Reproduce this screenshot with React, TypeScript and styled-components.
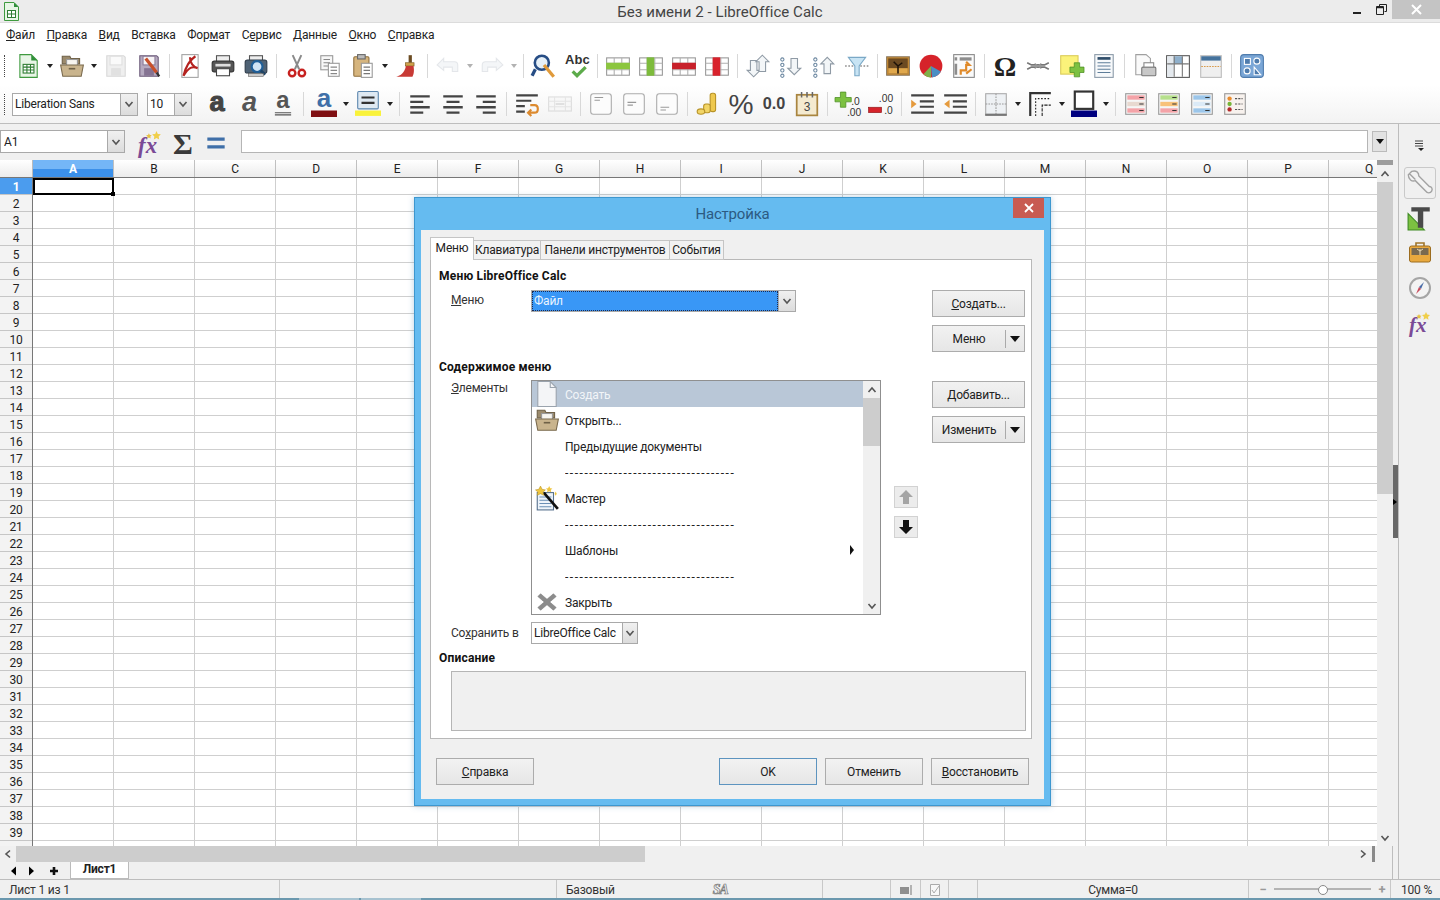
import React from 'react';
import styled, { createGlobalStyle } from 'styled-components';

const FONT = `Roboto, "Noto Sans", "Liberation Sans", sans-serif`;

const Global = createGlobalStyle`
  * { box-sizing: border-box; }
  html, body { margin: 0; padding: 0; background: #f0f0f0; }
  body { font-family: ${FONT}; font-size: 12px; color: #222; letter-spacing: -0.2px; }
`;

const Page = styled.div`position: relative; width: 1440px; height: 900px; overflow: hidden; display: flex; flex-direction: column;`;
const TitleBar = styled.div`height: 23px; flex: none; position: relative; display: flex; justify-content: center; background: #ececec; border-bottom: 1px solid #dcdcdc;`;
const AppLogo = styled.svg`position: absolute; left: 2px; top: 2px;`;
const TitleText = styled.div`font-size: 15px; line-height: 24px; color: #444; letter-spacing: 0.05px;`;
const WinControls = styled.div`position: absolute; right: 0; top: 0; height: 19px; display: flex; align-items: center;`;
const WinBtn = styled.div<{ $w: number }>`width: ${p => p.$w}px; height: 19px; display: flex; align-items: center; justify-content: center;`;
const WinClose = styled(WinBtn)`background: #c4c4c4;`;

const MenuBar = styled.div`height: 23px; flex: none; background: #fff; display: flex; align-items: center; gap: 11.6px; padding-left: 6px; font-size: 12px; color: #222;`;
const U = styled.span`text-decoration: underline; text-underline-offset: 1px;`;

const Toolbar = styled.div<{ $h: number; $pale?: boolean }>`
  height: ${p => p.$h}px; flex: none; display: flex; align-items: center; padding-left: 11.5px; position: relative;
  background: ${p => (p.$pale ? 'linear-gradient(#ffffff, #f3f3f3)' : '#fff')};
`;
const Grip = styled.div`position: absolute; left: 4px; top: 9px; bottom: 8px; border-left: 1px dotted #444;`;
const Tool = styled.div<{ $dim?: boolean }>`width: 33px; height: 26px; flex: none; display: flex; align-items: center; justify-content: center; opacity: ${p => (p.$dim ? 0.45 : 1)};`;
const Drop = styled.div<{ $dim?: boolean }>`width: 11px; flex: none; display: flex; justify-content: center; opacity: ${p => (p.$dim ? 0.35 : 1)}; &::before { content: ''; border: 3px solid transparent; border-top: 4px solid #222; border-bottom: 0; }`;
const Sep = styled.div`width: 8px; flex: none; height: 24px; display: flex; justify-content: center; &::before { content: ''; width: 1px; background: #d8d8d8; }`;
const IconSvg = styled.svg`overflow: visible; letter-spacing: normal; flex: none;`;

const Combo = styled.div<{ $w: number; $h?: number }>`
  width: ${p => p.$w}px; height: ${p => p.$h ?? 23}px; flex: none; display: flex; background: #fff; border: 1px solid #a9a9a9;
  color: #222; font-size: 12px; line-height: 1;
`;
const ComboText = styled.div`flex: 1; min-width: 0; display: flex; align-items: center; padding-left: 2px; white-space: nowrap; overflow: hidden;`;
const ComboSel = styled(ComboText)`background: #3997f6; color: #e8f3ff; outline: 1px dotted #1a2b55; outline-offset: -1px;`;
const ComboBtn = styled.div<{ $w?: number }>`width: ${p => p.$w ?? 17}px; flex: none; border: 1px solid #a9a9a9; border-width: 0 0 0 1px; background: linear-gradient(#f0f0f0, #dcdcdc); display: flex; align-items: center; justify-content: center;`;
const NameBox = styled(Combo)`padding-left: 1px;`;
const FontCombo = styled(Combo)`margin-right: 9px; padding-left: 0;`;
const SizeCombo = styled(Combo)`margin-right: 8px; padding-left: 0;`;
const FontRowStart = styled.div`width: 0.5px; flex: none;`;

const Body = styled.div`flex: 1; min-height: 0; display: flex; border-top: 1px solid #bdbdbd;`;
const MainCol = styled.div`width: 1393px; flex: none; display: flex; flex-direction: column;`;
const FormulaBar = styled.div`height: 36px; flex: none; display: flex; align-items: flex-start; padding-top: 6px; background: #f0f0f0;`;
const FxTools = styled.div`display: flex; margin: 0 9px 0 8px;`;
const FormulaInput = styled.div`flex: 1; height: 23px; background: #fff; border: 1px solid #b5b5b5;`;
const FormulaDrop = styled.div`width: 15px; height: 21px; margin: 1px 6px 0 4px; background: #e2e2e2; border: 1px solid #bbb; display: flex; align-items: center; justify-content: center; &::before { content: ''; border: 4px solid transparent; border-top: 5px solid #111; border-bottom: 0; }`;

const SheetRow = styled.div`flex: 1; min-height: 0; display: flex;`;
const Sheet = styled.div`width: 1377px; flex: none; display: flex; flex-direction: column; overflow: hidden;`;
const ColHeaders = styled.div`height: 18px; flex: none; display: flex; border-bottom: 1px solid #777; background: linear-gradient(#fff, #ececec);`;
const Corner = styled.div`width: 33px; flex: none; border-right: 1px solid #bbb;`;
const ColHead = styled.div<{ $on?: boolean }>`
  width: 81px; flex: none; text-align: center; line-height: 19px; font-size: 12px; border-right: 1px solid #c0c0c0; color: ${p => (p.$on ? '#fff' : '#222')};
  background: ${p => (p.$on ? 'linear-gradient(#74b6f7 50%, #3b90ea 50%)' : 'transparent')};
  font-weight: ${p => (p.$on ? 700 : 400)};
`;
const GridWrap = styled.div`flex: 1; min-height: 0; display: flex;`;
const RowHeads = styled.div`width: 33px; flex: none; overflow: hidden; border-right: 1px solid #777; background: #f3f3f3;`;
const RowHead = styled.div<{ $on?: boolean }>`
  height: 17px; text-align: center; line-height: 18px; font-size: 12px; border-bottom: 1px solid #c6c6c6; color: ${p => (p.$on ? '#fff' : '#222')};
  background: ${p => (p.$on ? '#4b9cee' : 'transparent')}; font-weight: ${p => (p.$on ? 700 : 400)};
`;
const GridBody = styled.div`
  position: relative; flex: 1; background-color: #fff;
  background-image:
    repeating-linear-gradient(to right, transparent 0 80px, #cfcfcf 80px 81px),
    repeating-linear-gradient(to bottom, transparent 0 16px, #cfcfcf 16px 17px);
`;
const CellCursor = styled.div`
  position: absolute; left: 0; top: 0; width: 81px; height: 17px; border: 2px solid #000;
  &::after { content: ''; position: absolute; right: -3px; bottom: -3px; width: 4px; height: 4px; background: #000; }
`;
const VScroll = styled.div`width: 16px; flex: none; display: flex; flex-direction: column; background: #f0f0f0;`;
const SplitBox = styled.div`height: 5px; background: #9c9c9c; flex: none;`;
const VArrow = styled.div`height: 17px; flex: none; display: flex; align-items: center; justify-content: center;`;
const VThumb = styled.div`height: 312px; flex: none; background: #cdcdcd;`;
const VTrack = styled.div`flex: 1;`;

const HScroll = styled.div`height: 16px; flex: none; display: flex; align-items: stretch; background: #f0f0f0; border-right: 1px solid #bdbdbd;`;
const HArrow = styled.div`width: 16px; flex: none; display: flex; align-items: center; justify-content: center;`;
const HThumb = styled.div`width: 629px; flex: none; background: #cdcdcd;`;
const HTrack = styled.div`flex: 1;`;
const HGrip = styled.div`width: 3px; margin: 0 17px 0 1px; flex: none; background: #8a8a8a;`;
const TabRow = styled.div`height: 17px; flex: none; display: flex; align-items: stretch; background: #f0f0f0; border-right: 1px solid #bdbdbd;`;
const TabNav = styled.div`width: 70px; flex: none; display: flex; align-items: center; padding-left: 8px;`;
const NavBtn = styled.div<{ $w: number }>`width: ${p => p.$w}px; flex: none; display: flex;`;
const SheetTab = styled.div`width: 59px; background: #fff; border: 1px solid #bbb; border-top: 0; text-align: center; font-weight: 700; line-height: 15px; font-size: 12px;`;

const DeckStrip = styled.div`width: 6px; flex: none; display: flex; align-items: center; background: #f0f0f0; border-right: 1px solid #bdbdbd;`;
const DeckHandle = styled.div`width: 6px; height: 73px; background: #686868; display: flex; align-items: center; &::before { content: ''; border: 3px solid transparent; border-left: 4px solid #000; border-right: 0; }`;
const Sidebar = styled.div`flex: 1; background: #f0f0f0; display: flex; flex-direction: column; align-items: center;`;
const DeckMenu = styled.div`height: 43px; flex: none; display: flex; align-items: flex-end; padding-bottom: 15px;`;
const DeckTool = styled.div<{ $on?: boolean }>`
  width: 32px; height: 32px; margin-bottom: 3px; flex: none; display: flex; align-items: center; justify-content: center;
  border: 1px solid ${p => (p.$on ? '#c9c9c9' : 'transparent')}; border-radius: 3px;
`;

const StatusBar = styled.div`height: 19px; flex: none; display: flex; align-items: stretch; background: #f0f0f0; border-top: 1px solid #bdbdbd; font-size: 12px; color: #333;`;
const StatusCell = styled.div<{ $w: number; $c?: boolean }>`
  width: ${p => p.$w}px; flex: none; display: flex; align-items: center; border-right: 1px solid #c8c8c8; line-height: 1; padding-top: 2px;
  padding-left: ${p => (p.$c ? 0 : 9)}px; justify-content: ${p => (p.$c ? 'center' : 'flex-start')};
`;
const SigMark = styled.span`margin-left: 98px; font: italic 700 14px "Liberation Serif", serif; color: #f0f0f0; -webkit-text-stroke: 0.7px #777; letter-spacing: -1px;`;
const ZoomCell = styled(StatusCell)`padding-left: 10px; gap: 4px; padding-top: 0;`;
const ZoomTrack = styled.div`width: 97px; height: 2px; background: #b4b4b4; position: relative; margin: 0 3px; &::after { content: ''; position: absolute; left: 44px; top: -3px; width: 8px; height: 8px; border-radius: 50%; background: #fff; border: 1px solid #888; }`;
const ZoomSign = styled.div`width: 8px; text-align: center; color: #999; font-weight: 700; font-size: 13px;`;
const ZoomPct = styled.div`flex: 1; display: flex; align-items: center; padding: 2px 0 0 10px;`;
const BottomEdge = styled.div`height: 2px; flex: none; background: #6b98ae; display: flex; padding-left: 299px; gap: 2px;`;
const BottomTab = styled.div<{ $w: number }>`width: ${p => p.$w}px; background: #a7c2d0;`;

/* dialog */
const Dialog = styled.div`
  position: absolute; left: 414px; top: 197px; width: 637px; height: 609px; background: #65bbf0; border: 1px solid #3d97cf;
  display: flex; flex-direction: column; padding: 0 6px 6px; box-shadow: 0 0 6px rgba(60,120,170,.35);
`;
const DlgTitle = styled.div`height: 32px; flex: none; position: relative; display: flex; align-items: center; justify-content: center; font-size: 15px; color: #2c5a82;`;
const DlgClose = styled.div`position: absolute; right: 0; top: 0; width: 31px; height: 20px; background: #c85b52; display: flex; align-items: center; justify-content: center;`;
const DlgInner = styled.div`flex: 1; min-height: 0; background: #f0f0f0; display: flex; flex-direction: column; padding: 8px 12px 0 9px;`;
const Tabs = styled.div`display: flex; align-items: flex-end; height: 22px; flex: none; position: relative; z-index: 1; margin-bottom: -1px;`;
const DlgTab = styled.div<{ $w: number; $on?: boolean }>`
  width: ${p => p.$w}px; height: ${p => (p.$on ? 23 : 20)}px; flex: none; text-align: center; font-size: 12px; line-height: ${p => (p.$on ? 21 : 19)}px; white-space: nowrap;
  background: ${p => (p.$on ? '#fff' : '#f2f2f2')}; border: 1px solid #c5c5c5; border-left-width: ${p => (p.$on ? 1 : 0)}px; border-bottom: ${p => (p.$on ? 0 : '1px solid #c5c5c5')};
`;
const Panel = styled.div`height: 480px; flex: none; background: #fff; border: 1px solid #b8b8b8; display: flex; flex-direction: column; padding: 7px 6px 0 8px;`;
const Heading = styled.div<{ $mt?: number }>`height: 16px; flex: none; font-weight: 700; line-height: 16px; font-size: 12px; color: #111; letter-spacing: 0.2px; margin-top: ${p => p.$mt ?? 0}px;`;
const BlockRow = styled.div<{ $mt: number }>`display: flex; flex: none; margin-top: ${p => p.$mt}px;`;
const FieldLabel = styled.div<{ $shift?: number }>`width: 80px; margin-left: 12px; flex: none; font-size: 12px; color: #333; line-height: 20px; margin-top: ${p => p.$shift ?? 0}px;`;
const ButtonStack = styled.div<{ $mt?: number }>`margin-left: auto; width: 93px; flex: none; display: flex; flex-direction: column; gap: 8px; margin-top: ${p => p.$mt ?? 0}px;`;
const PushBtn = styled.div<{ $def?: boolean }>`
  height: 27px; flex: none; display: flex; align-items: center; justify-content: center; font-size: 12px; color: #222;
  background: linear-gradient(#f2f2f2, #e6e6e6); border: 1px solid ${p => (p.$def ? '#5d94bf' : '#acacac')};
`;
const SplitBtn = styled(PushBtn)`justify-content: flex-start;`;
const SplitLabel = styled.div`width: 73px; text-align: center; border-right: 1px solid #aaa; line-height: 18px;`;
const SplitArrow = styled.div`flex: 1; display: flex; justify-content: center; &::before { content: ''; border: 5px solid transparent; border-top: 6px solid #111; border-bottom: 0; }`;
const ItemList = styled.div`width: 350px; height: 235px; flex: none; display: flex; border: 1px solid #8f8f8f; background: #fff; overflow: hidden;`;
const Rows = styled.div`flex: 1; min-width: 0; display: flex; flex-direction: column;`;
const ItemRow = styled.div<{ $sel?: boolean }>`
  height: 26px; flex: none; display: flex; align-items: center; padding-right: 9px; font-size: 12px;
  background: ${p => (p.$sel ? '#b9c7d7' : 'transparent')}; color: ${p => (p.$sel ? '#f2f5f8' : '#222')};
`;
const ItemIcon = styled.div`width: 33px; flex: none; display: flex; justify-content: center; padding-right: 3px;`;
const ItemText = styled.div`flex: 1; white-space: nowrap; padding-top: 2px;`;
const Dashes = styled(ItemText)`letter-spacing: 1.55px; overflow: hidden;`;
const Sub = styled.div`border: 5px solid transparent; border-left: 4px solid #111; border-right: 0;`;
const ListScroll = styled.div`width: 17px; flex: none; background: #f0f0f0; display: flex; flex-direction: column;`;
const ListThumb = styled.div`height: 48px; flex: none; background: #cdcdcd;`;
const ListTrack = styled.div`flex: 1;`;
const MoveCol = styled.div`width: 24px; margin: 106px 0 0 13px; flex: none; display: flex; flex-direction: column; gap: 8px;`;
const MoveBtn = styled.div`height: 22px; background: #ececec; border: 1px solid #d2d2d2; display: flex; align-items: center; justify-content: center;`;
const Desc = styled.div`height: 60px; flex: none; margin: 5px -1px 0 12px; background: #f0f0f0; border: 1px solid #b5b5b5;`;
const Footer = styled.div`display: flex; margin-top: 19px; padding: 0 3px 0 6px; justify-content: space-between; flex: none;`;
const FooterGroup = styled.div`display: flex; gap: 8px;`;
const FooterBtn = styled(PushBtn)`width: 98px;`;

const tf = { fontFamily: '"Liberation Sans", sans-serif' };

const gridIcon = (band: 'row' | 'col', c: string) => (
  <>
    <rect x="1.5" y="4.5" width="21" height="16" fill="#fff" stroke="#999" />
    <path d="M1.5 9.5H22.5M1.5 15.5H22.5M8.5 4.5V20.5M15.5 4.5V20.5" stroke="#b0b0b0" />
    {band === 'row' ? <rect x="1" y="9" width="22" height="6" fill={c} /> : <rect x="8" y="4" width="7" height="17" fill={c} />}
  </>
);
const lines = (d: string, w = 2) => <path d={d} stroke="#444" strokeWidth={w} fill="none" />;
const cf = (a: string, b: string, c: string) => (
  <>
    <rect x="2.5" y="2.5" width="19" height="19" fill="#f6f6f6" stroke="#999" />
    <rect x="4" y="4" width="16" height="4" fill={a} /><rect x="4" y="10" width="16" height="4" fill={b} /><rect x="4" y="16" width="16" height="4" fill={c} />
    <path d="M15 6h4M15 12h4M15 18h4" stroke="#333" />
  </>
);
const frame = (y: number) => (
  <>
    <rect x="2.5" y="2.5" width="19" height="19" rx="2.5" fill="#fcfcfc" stroke="#aaa" />
    <path d={`M6 ${y}h8M6 ${y + 2.5}h5`} stroke="#999" />
  </>
);
const arrowUp = 'M-3 7V-2H-6L0 -8L6 -2H3V7Z';
const dots = <path d="M4 4.5a1.5 1.5 0 1 0 .01 0M4 9.5a1.5 1.5 0 1 0 .01 0M4 14.5a1.5 1.5 0 1 0 .01 0M4 19.5a1.5 1.5 0 1 0 .01 0" stroke="#6f8aa3" strokeWidth="1" fill="none" />;

const icons: Record<string, React.ReactNode> = {
  newCalc: <><path d="M4.5 1.5H15L20.5 7V22.5H4.5Z" fill="#e8f5e6" stroke="#3f9a3f" /><path d="M15 1.5V7H20.5Z" fill="#2f8f3a" /><rect x="7.5" y="10.5" width="10" height="8" fill="#fff" stroke="#2f7d33" /><path d="M7.5 13h10M7.5 15.7h10M11 10.5v8M14.3 10.5v8" stroke="#2f7d33" /></>,
  open: <><path d="M3 3h7l1 2h8v5H3Z" fill="#9b8a6c" stroke="#6f6147" /><rect x="7" y="6" width="10" height="8" fill="#f7f5ef" stroke="#999" /><path d="M1.5 11h21l-2 10.5H3.5Z" fill="#c9b48d" stroke="#7a6a4e" /><path d="M9 14.5h6" stroke="#6f6147" strokeWidth="1.5" /></>,
  save: <><path d="M3.5 2.5H19l1.5 1.5V21.5H3.5Z" fill="#dcdcdc" stroke="#aaa" /><rect x="6.5" y="3" width="11" height="8" fill="#f5f5f5" stroke="#bbb" /><rect x="7.5" y="14" width="9" height="7" fill="#bdbdbd" /></>,
  saveAs: <><path d="M3.5 2.5H19l1.5 1.5V21.5H3.5Z" fill="#b5a9bf" stroke="#6c5b7a" /><rect x="6.5" y="3" width="11" height="8" fill="#f5f2f5" stroke="#8d7d99" /><rect x="7.5" y="14" width="9" height="7" fill="#857392" /><path d="M9 5L19 18" stroke="#c8502a" strokeWidth="3" /><path d="M19 18l2.5 3.5" stroke="#333" strokeWidth="2" /></>,
  pdf: <><rect x="4.5" y="1.5" width="15" height="21" fill="#fff" stroke="#a2a2a2" /><path d="M17 3C11 7 8 13 6 21C11 13 14 12 19 14C15 13 12 9 12 4" fill="none" stroke="#b4221f" strokeWidth="2" /></>,
  print: <><rect x="6" y="2.5" width="12" height="6" fill="#eee" stroke="#555" /><rect x="2" y="7.5" width="20" height="10" rx="2" fill="#555" stroke="#333" /><rect x="5" y="10" width="14" height="2.5" fill="#ddd" /><rect x="6" y="14.5" width="12" height="6.5" fill="#fff" stroke="#444" /></>,
  preview: <><rect x="6" y="2.5" width="12" height="5" fill="#eee" stroke="#555" /><rect x="2" y="6.5" width="20" height="12" rx="2" fill="#4f6275" stroke="#2f3c4a" /><circle cx="13" cy="12.5" r="5" fill="#cfe3f5" stroke="#1f5f99" strokeWidth="2" /><path d="M16.5 16l4 4" stroke="#1f4466" strokeWidth="2.5" /><rect x="5" y="19" width="14" height="2.5" fill="#ccc" stroke="#555" strokeWidth=".5" /></>,
  cut: <><path d="M8 2l6 13M16 2l-6 13" stroke="#8a8a8a" strokeWidth="1.8" /><circle cx="7.5" cy="18.5" r="3" fill="#fff" stroke="#c7211f" strokeWidth="2.2" /><circle cx="16.5" cy="18.5" r="3" fill="#fff" stroke="#c7211f" strokeWidth="2.2" /></>,
  copy: <><rect x="3.5" y="2.5" width="11" height="13" fill="#f7f7f7" stroke="#999" /><path d="M6 6h6M6 9h6M6 12h6" stroke="#888" /><rect x="10.5" y="9.5" width="10" height="12" fill="#fff" stroke="#999" /><path d="M12.5 13h6M12.5 16h6M12.5 19h6" stroke="#888" /></>,
  paste: <><rect x="3.5" y="3.5" width="14" height="18" rx="1" fill="#d6b57e" stroke="#8f6f3c" /><rect x="7" y="1.5" width="7" height="4" fill="#bbb" stroke="#666" /><rect x="10.5" y="9.5" width="10" height="13" fill="#fff" stroke="#999" /><path d="M12.5 13h6M12.5 16h6M12.5 19h6" stroke="#777" /></>,
  clone: <><path d="M15 2v7" stroke="#6b4b22" strokeWidth="3" /><rect x="10.5" y="9" width="8" height="3" fill="#d2a24c" stroke="#7a5a20" strokeWidth=".6" /><path d="M11 12h7c1 5 0 8-1 10H2c4-1 8-4 9-10Z" fill="#c83a35" /></>,
  undo: <path d="M8 5L2 11l6 5v-3h8v4h5v-6c0-2-1-3-3-3H8Z" fill="#e8ecf0" stroke="#c4cad2" />,
  redo: <path d="M16 5l6 6-6 5v-3H8v4H3v-6c0-2 1-3 3-3h10Z" fill="#e8ecf0" stroke="#c4cad2" />,
  find: <><circle cx="10" cy="9" r="6.5" fill="#e6f0f8" stroke="#274d85" strokeWidth="2.4" /><path d="M12 11l9 11" stroke="#e09a3a" strokeWidth="3" /><path d="M4 15L1 21" stroke="#274d85" strokeWidth="3" /></>,
  spell: <><text x="1" y="10" fontSize="12" fontWeight="700" fill="#333" {...tf}>Abc</text><path d="M8 17l4 4 8-8" fill="none" stroke="#5cab4a" strokeWidth="3" /></>,
  insRow: gridIcon('row', '#8cc63f'), insCol: gridIcon('col', '#7dbb3c'), delRow: gridIcon('row', '#c8202a'), delCol: gridIcon('col', '#d8222c'),
  sort: <g fill="#f3f6f8" stroke="#8f9aa5"><g transform="translate(8 14) rotate(180)"><path d={arrowUp} /></g><g transform="translate(16 10)"><path d={arrowUp} /></g></g>,
  sortAsc: <>{dots}<g transform="translate(15 12) rotate(180)" fill="#f3f6f8" stroke="#8f9aa5"><path d={arrowUp} /></g></>,
  sortDesc: <>{dots}<g transform="translate(15 12)" fill="#f3f6f8" stroke="#8f9aa5"><path d={arrowUp} /></g></>,
  filter: <><path d="M4 4h16l-6 8v9h-4v-9Z" fill="#c8e4f4" stroke="#7aa8c6" /><path d="M1 12h8M15 12h8" stroke="#555" strokeDasharray="1.5 1.5" /></>,
  image: <><rect x="1.5" y="3.5" width="21" height="17" fill="#c98a2e" stroke="#8a7a62" /><rect x="3" y="5" width="18" height="14" fill="#6b4a22" /><path d="M3 14h18v5H3Z" fill="#e0a84c" /><path d="M12 19v-8M12 12l-4-4M12 12l4-3" stroke="#1c1208" strokeWidth="1.4" /></>,
  chart: <><circle cx="12" cy="12" r="10.5" fill="#d6232a" /><path d="M12 12l9 5a10.5 10.5 0 0 1-8 5.5Z" fill="#4a8fc4" /><path d="M12 12v10.5a10.5 10.5 0 0 1-7-3Z" fill="#7fb04a" /></>,
  pivot: <><rect x="2.5" y="1.5" width="19" height="21" fill="#fafafa" stroke="#888" /><path d="M8 4h11v3H8Z" fill="#8d8d8d" /><path d="M4.5 4v3M4.5 10v10" stroke="#8d8d8d" strokeWidth="2.4" /><path d="M9 20v-4h5v-5h3l-3-3M14 19l5-4" fill="none" stroke="#e08a2a" strokeWidth="2" /></>,
  omega: <text x="12" y="21" textAnchor="middle" fontSize="26" fontWeight="700" fill="#222" fontFamily="'Liberation Serif', serif">Ω</text>,
  link: <><path d="M2 9l4 2h12l4-2M2 15l4-2h12l4 2" fill="none" stroke="#777" strokeWidth="1.6" /><path d="M8 12h8M9 9.5l6 5M15 9.5l-6 5" stroke="#999" /></>,
  note: <><rect x="2.5" y="2.5" width="16" height="17" fill="#fbf27a" stroke="#dacb5a" /><path d="M15 9h5v4h4v5h-4v4h-5v-4h-4v-5h4Z" fill="#7cc141" stroke="#4c8f24" strokeWidth=".7" /></>,
  header: <><rect x="3.5" y="1.5" width="17" height="21" fill="#f7f9fb" stroke="#8a99a8" /><path d="M6 5h12" stroke="#2f4d6a" strokeWidth="2.5" /><path d="M6 9h12M6 12h12M6 15h12M6 18h12" stroke="#5e7d99" /></>,
  printArea: <><path d="M3.5 1.5H13L17 5V20H3.5Z" fill="#fafafa" stroke="#a0a0a0" /><rect x="9" y="13" width="13" height="8" rx="1" fill="#c8c8c8" stroke="#777" /><rect x="11" y="9" width="9" height="4" fill="#fff" stroke="#888" /></>,
  freeze: <><rect x="1.5" y="2.5" width="21" height="20" fill="#fff" stroke="#555" /><rect x="2" y="3" width="6" height="19" fill="#e4e9ee" /><rect x="8" y="3" width="8" height="7" fill="#8fb0cc" /><path d="M2 10h20M8.5 3v19M16 3v19" stroke="#777" /></>,
  headers: <><rect x="2.5" y="2.5" width="19" height="20" fill="#efefef" stroke="#bbb" /><rect x="3" y="3" width="18" height="4" fill="#44729c" /><path d="M3 12.5h18" stroke="#d89a4a" strokeDasharray="1.5 1" /></>,
  shapes: <><rect x="1.5" y="1.5" width="21" height="21" rx="3" fill="#7aa6d6" stroke="#4f7cad" /><rect x="5" y="5" width="5.5" height="5.5" fill="#4f7cad" stroke="#fff" /><circle cx="16.5" cy="7.5" r="2.8" fill="#4f7cad" stroke="#fff" /><circle cx="7.5" cy="16.5" r="2.8" fill="#4f7cad" stroke="#fff" /><path d="M14 13l6 7h-6Z" fill="#4f7cad" stroke="#fff" /></>,
  bold: <text x="12" y="18.5" textAnchor="middle" fontSize="25" fontWeight="900" fill="#444" stroke="#444" strokeWidth="1" {...tf}>a</text>,
  italic: <text x="11.5" y="18.5" textAnchor="middle" fontSize="25" fontWeight="700" fontStyle="italic" fill="#555" {...tf}>a</text>,
  underline: <><text x="12" y="16" textAnchor="middle" fontSize="22" fontWeight="700" fill="#555" {...tf}>a</text><path d="M4.5 20h15M4.5 22h15" stroke="#555" /></>,
  fontColor: <><text x="12" y="15" textAnchor="middle" fontSize="24" fontWeight="700" fill="#3f6fa8" {...tf}>a</text><rect x="0" y="18" width="24" height="6" fill="#7f0f12" /></>,
  bgColor: <><rect x="2.5" y="0.5" width="19" height="16" rx="1" fill="#dfe9f2" stroke="#5a85ad" /><path d="M6 6h12M6 11h12" stroke="#333" strokeWidth="2" /><rect x="0" y="18" width="24" height="5" fill="#f9f23b" /></>,
  alignL: lines('M3 5h18M3 10h12M3 15h18M3 20h12', 2.2),
  alignC: lines('M3 5h18M6 10h12M3 15h18M6 20h12', 2.2),
  alignR: lines('M3 5h18M9 10h12M3 15h18M9 20h12', 2.2),
  wrap: <>{lines('M2 4h20M2 9h14M2 14h8M2 19h8', 2)}<path d="M13 20h6c4 0 4-7 0-7h-4M16 17l-3 3 3 3" fill="none" stroke="#dc8a2f" strokeWidth="2" /></>,
  merge: <><rect x="1.5" y="5.5" width="21" height="13" fill="#f5f5f5" stroke="#bbb" /><path d="M1.5 9.5h21M1.5 14.5h21M7 5.5v13M17 5.5v13" stroke="#ccc" /><path d="M8 12h8" stroke="#999" /></>,
  valTop: frame(6), valMid: frame(10.5), valBot: frame(15),
  currency: <><rect x="14" y="2" width="5" height="17" rx="2" fill="#eec84e" stroke="#b89327" /><rect x="8" y="12" width="6" height="8" rx="2" fill="#f2d566" stroke="#b89327" /><ellipse cx="5.5" cy="19" rx="3.5" ry="2.5" fill="#f2d566" stroke="#b89327" /></>,
  percent: <text x="12" y="21" textAnchor="middle" fontSize="26" fill="#444" {...tf}>%</text>,
  number: <text x="12" y="17" textAnchor="middle" fontSize="15" fontWeight="700" fill="#444" {...tf}>0.0</text>,
  date: <><rect x="2.5" y="3.5" width="19" height="19" fill="#f4ead0" stroke="#a9853f" strokeWidth="1.6" /><path d="M7 1v5M12 1v5M17 1v5" stroke="#666" strokeWidth="1.4" /><text x="12" y="18.5" textAnchor="middle" fontSize="11" fill="#444" {...tf}>3</text></>,
  addDec: <><path d="M5 1h5v5h5v4h-5v5H5v-5H0V6h5Z" fill="#7cc141" stroke="#4c8f24" strokeWidth=".7" /><text x="15" y="13" fontSize="9.5" fill="#333" {...tf}>.0</text><text x="11" y="23" fontSize="9.5" fill="#333" {...tf}>.00</text></>,
  delDec: <><text x="10" y="10" fontSize="9.5" fill="#333" {...tf}>.00</text><rect x="0.5" y="15" width="12" height="5" fill="#d6232a" stroke="#8f1a1d" strokeWidth=".6" /><text x="15" y="21" fontSize="9.5" fill="#333" {...tf}>.0</text></>,
  indent: <>{lines('M2 4h21M10 9.5h13M10 14.5h13M2 20h21', 2)}<path d="M2 8l5 4-5 4Z" fill="#e59a3c" /></>,
  outdent: <>{lines('M2 4h21M10 9.5h13M10 14.5h13M2 20h21', 2)}<path d="M7 8l-5 4 5 4Z" fill="#e59a3c" /></>,
  borders: <><rect x="2.5" y="2.5" width="19" height="19" fill="#eef1f4" stroke="#aaa" /><path d="M2.5 12h19M12 2.5v19" stroke="#999" strokeDasharray="1.5 1" /><path d="M2 22h20" stroke="#777" strokeWidth="2" /></>,
  lineStyle: <><path d="M3 23V2h19" fill="none" stroke="#333" strokeWidth="2" /><path d="M8 23V7h14" fill="none" stroke="#222" strokeDasharray="1.5 1.5" /><path d="M14 23V13h8" fill="none" stroke="#222" strokeDasharray="3 1" /></>,
  lineColor: <><rect x="3.5" y="0.5" width="17" height="16" fill="#fff" stroke="#333" strokeWidth="2" /><rect x="0" y="18" width="24" height="6" fill="#00007f" /></>,
  cf1: cf('#f4a3a8', '#e8d9d0', '#f4a3a8'), cf2: cf('#b6e08c', '#f8c27a', '#f4a3a8'), cf3: cf('#9cc6ea', '#dbeaf7', '#9cc6ea'),
  cf4: <><rect x="2.5" y="2.5" width="19" height="19" fill="#f8f2ee" stroke="#999" /><circle cx="7" cy="7" r="2" fill="#e98c2e" /><circle cx="7" cy="12" r="2" fill="#76b539" /><circle cx="7" cy="17" r="2" fill="#b32a2a" /><path d="M12 7h7M12 12h7M12 17h7" stroke="#555" strokeDasharray="2 1" /></>,
  fx: <><text x="1" y="21" fontSize="21" fontWeight="700" fontStyle="italic" fill="#7a4a96" fontFamily="'Liberation Serif', serif">fx</text><path d="M18 1l1.2 2.6 2.8.3-2 2 .5 2.8-2.5-1.4-2.5 1.4.5-2.8-2-2 2.8-.3Z" fill="#f0cf4a" /><path d="M11 3l.8 1.6 1.8.2-1.3 1.2.3 1.8-1.6-.9-1.6.9.3-1.8-1.3-1.2 1.8-.2Z" fill="#e8c040" /></>,
  sigma: <text x="12" y="22" textAnchor="middle" fontSize="28" fontWeight="700" fill="#3a3a3a" fontFamily="'Liberation Serif', serif">Σ</text>,
  equals: <path d="M4 8.5h16M4 15.5h16" stroke="#3f6fa8" strokeWidth="3" />,
  wrench: <path d="M3 4l5 5M5 2l-3 3c0 4 3 6 6 5l9 9c1 2 4 2 5 0 1-2 0-4-2-4l-9-9c0-3-2-5-6-4Z" fill="#f3f3f3" stroke="#a3a3a3" strokeWidth="1.2" />,
  styles: <><path d="M1 23V8l15 15Z" fill="#7cc141" stroke="#3e8a22" /><path d="M4 2h17v4h-6v15h-5V6H4Z" fill="#4a4a4a" /></>,
  gallery: <><path d="M8 5V2h8v3" fill="none" stroke="#a0752b" strokeWidth="1.6" /><rect x="1.5" y="5" width="21" height="16" rx="2" fill="#e9a93e" stroke="#9c6c1f" /><rect x="3.5" y="7" width="17" height="7" fill="#7a6a4f" /><path d="M12 14v-6M12 10l-3-2M12 10l3-2" stroke="#e8d9b5" /></>,
  compass: <><circle cx="12" cy="12" r="10" fill="#f3f3f3" stroke="#a5a5a5" strokeWidth="2" /><path d="M16 6l-5 5 2 2Z" fill="#4a6ca8" /><path d="M8 18l3-7 2 2Z" fill="#c84a5a" /></>,
  docBlank: <><path d="M3.5 0.5H15L20.5 6V23.5H3.5Z" fill="#f4f5f7" stroke="#9aa3ad" /><path d="M15 0.5V6H20.5" fill="none" stroke="#9aa3ad" /></>,
  wizard: <><rect x="3" y="7" width="15" height="16" fill="#eef4fa" stroke="#55708d" /><path d="M5 11h11M5 14h11M5 17h11M5 20h11" stroke="#6a8fb5" /><path d="M9 7l13 15" stroke="#111" strokeWidth="2.5" /><path d="M6 1l1.5 3 3 .5-2.2 2 .6 3-2.9-1.5L3 9.5l.6-3-2.2-2 3-.5Z" fill="#efc53f" stroke="#b58f1d" strokeWidth=".5" /><path d="M14 1l1 2 2 .3-1.5 1.4.4 2-1.9-1-1.9 1 .4-2L11 3.3l2-.3Z" fill="#efc53f" /><path d="M20 6l1 2-1 2-1-2Z" fill="#efc53f" /></>,
  close: <path d="M5 3l7 6 7-6 3 3-7 6 7 6-3 3-7-6-7 6-3-3 7-6-7-6Z" fill="#8c8c8c" stroke="#777" strokeWidth=".6" />,
};

const Icon = ({ name, size = 26 }: { name: string; size?: number }) => (
  <IconSvg width={size} height={size} viewBox="0 0 24 24">{icons[name]}</IconSvg>
);

const Chevron = ({ dir = 'down', c = '#555' }: { dir?: 'down' | 'up' | 'left' | 'right'; c?: string }) => {
  const d = { down: 'M1.5 3l3.5 4 3.5-4', up: 'M1.5 7l3.5-4 3.5 4', left: 'M7 1.5L3 5l4 3.5', right: 'M3 1.5L7 5l-4 3.5' }[dir];
  return <svg width="10" height="10" viewBox="0 0 10 10"><path d={d} fill="none" stroke={c} strokeWidth="1.6" /></svg>;
};
const Tri = ({ dir, c = '#000', size = 12 }: { dir: 'left' | 'right'; c?: string; size?: number }) => (
  <svg width={size} height={size} viewBox="0 0 12 12"><path d={dir === 'left' ? 'M8 1.5L3 6l5 4.5Z' : 'M4 1.5L9 6l-5 4.5Z'} fill={c} /></svg>
);

type Item = string; // 'name', '*' adds a drop arrow, '~' dims it, '|' is a separator
const tb1: Item[] = ['newCalc*', 'open*', 'save~', 'saveAs', '|', 'pdf', 'print', 'preview', '|', 'cut', 'copy', 'paste*', 'clone', '|', 'undo*~', 'redo*~', '|', 'find', 'spell', '|', 'insRow', 'insCol', 'delRow', 'delCol', '|', 'sort', 'sortAsc', 'sortDesc', 'filter', '|', 'image', 'chart', 'pivot', '|', 'omega', 'link', 'note', 'header', '|', 'printArea', 'freeze', 'headers', '|', 'shapes'];
const tb2: Item[] = ['bold', 'italic', 'underline', '|', 'fontColor*', 'bgColor*', '|', 'alignL', 'alignC', 'alignR', '|', 'wrap', 'merge~', '|', 'valTop', 'valMid', 'valBot', '|', 'currency', 'percent', 'number', 'date', '|', 'addDec', 'delDec', '|', 'indent', 'outdent', '|', 'borders*', 'lineStyle*', 'lineColor*', '|', 'cf1', 'cf2', 'cf3', 'cf4'];

const ToolItems = ({ items }: { items: Item[] }) => (
  <>
    {items.map((it, i) => {
      if (it === '|') return <Sep key={i} />;
      const name = it.replace(/[*~]/g, '');
      const dim = it.includes('~');
      return (
        <React.Fragment key={i}>
          <Tool $dim={dim}><Icon name={name} /></Tool>
          {it.includes('*') && <Drop $dim={dim} />}
        </React.Fragment>
      );
    })}
  </>
);

const COLS = 'ABCDEFGHIJKLMNOPQ'.split('');
const ROWS = Array.from({ length: 40 }, (_, i) => i + 1);
const dash = '-'.repeat(35);

export default function App() {
  return (
    <Page>
      <Global />
      <TitleBar>
        <AppLogo width="18" height="19" viewBox="0 0 18 19">
          <path d="M2.5 .5H12L16.5 5V18.5H2.5Z" fill="#e8f5e6" stroke="#3f9a3f" />
          <path d="M12 .5V5H16.5Z" fill="#2f8f3a" />
          <rect x="5.5" y="8.5" width="8" height="7" fill="#fff" stroke="#2f7d33" />
          <path d="M5.5 12h8M9.5 8.5v7" stroke="#2f7d33" />
        </AppLogo>
        <TitleText>Без имени 2 - LibreOffice Calc</TitleText>
        <WinControls>
          <WinBtn $w={26}><svg width="10" height="10"><path d="M1 8h8" stroke="#222" strokeWidth="2" /></svg></WinBtn>
          <WinBtn $w={22}><svg width="11" height="11"><path d="M3.5 2.5V.5h7v7h-2M.5 2.5h7v8h-7Z" fill="none" stroke="#222" /><path d="M.5 3.5h7" stroke="#222" strokeWidth="1.5" /></svg></WinBtn>
          <WinClose $w={48}><svg width="11" height="11"><path d="M1 1l9 9M10 1l-9 9" stroke="#fff" strokeWidth="2" /></svg></WinClose>
        </WinControls>
      </TitleBar>

      <MenuBar>
        <span><U>Ф</U>айл</span>
        <span><U>П</U>равка</span>
        <span><U>В</U>ид</span>
        <span>Вст<U>а</U>вка</span>
        <span>Фор<U>м</U>ат</span>
        <span>С<U>е</U>рвис</span>
        <span><U>Д</U>анные</span>
        <span><U>О</U>кно</span>
        <span><U>С</U>правка</span>
      </MenuBar>

      <Toolbar $h={39}>
        <Grip />
        <ToolItems items={tb1} />
      </Toolbar>
      <Toolbar $h={38} $pale>
        <Grip />
        <FontRowStart />
        <FontCombo $w={126}>
          <ComboText>Liberation Sans</ComboText>
          <ComboBtn><Chevron /></ComboBtn>
        </FontCombo>
        <SizeCombo $w={45}>
          <ComboText>10</ComboText>
          <ComboBtn><Chevron /></ComboBtn>
        </SizeCombo>
        <ToolItems items={tb2} />
      </Toolbar>

      <Body>
        <MainCol>
          <FormulaBar>
            <NameBox $w={125}>
              <ComboText>A1</ComboText>
              <ComboBtn><Chevron /></ComboBtn>
            </NameBox>
            <FxTools>
              <Tool><Icon name="fx" /></Tool>
              <Tool><Icon name="sigma" /></Tool>
              <Tool><Icon name="equals" /></Tool>
            </FxTools>
            <FormulaInput />
            <FormulaDrop />
          </FormulaBar>
          <SheetRow>
            <Sheet>
              <ColHeaders>
                <Corner />
                {COLS.map(c => <ColHead key={c} $on={c === 'A'}>{c}</ColHead>)}
              </ColHeaders>
              <GridWrap>
                <RowHeads>
                  {ROWS.map(r => <RowHead key={r} $on={r === 1}>{r === 40 ? '' : r}</RowHead>)}
                </RowHeads>
                <GridBody><CellCursor /></GridBody>
              </GridWrap>
            </Sheet>
            <VScroll>
              <SplitBox />
              <VArrow><Chevron dir="up" /></VArrow>
              <VThumb />
              <VTrack />
              <VArrow><Chevron dir="down" /></VArrow>
            </VScroll>
          </SheetRow>
          <HScroll>
            <HArrow><Chevron dir="left" /></HArrow>
            <HThumb />
            <HTrack />
            <HArrow><Chevron dir="right" /></HArrow>
            <HGrip />
          </HScroll>
          <TabRow>
            <TabNav>
              <NavBtn $w={17}><Tri dir="left" /></NavBtn>
              <NavBtn $w={23}><Tri dir="right" /></NavBtn>
              <NavBtn $w={12}><svg width="12" height="12"><path d="M6 2v8M2 6h8" stroke="#111" strokeWidth="2.6" /></svg></NavBtn>
            </TabNav>
            <SheetTab>Лист1</SheetTab>
          </TabRow>
        </MainCol>
        <DeckStrip><DeckHandle /></DeckStrip>
        <Sidebar>
          <DeckMenu>
            <svg width="12" height="12" viewBox="0 0 12 12"><path d="M1 1h8M1 3.5h8M1 6h8" stroke="#444" /><path d="M4 8h6l-3 3Z" fill="#222" /></svg>
          </DeckMenu>
          <DeckTool $on><Icon name="wrench" size={28} /></DeckTool>
          <DeckTool><Icon name="styles" size={26} /></DeckTool>
          <DeckTool><Icon name="gallery" size={24} /></DeckTool>
          <DeckTool><Icon name="compass" size={24} /></DeckTool>
          <DeckTool><Icon name="fx" size={24} /></DeckTool>
        </Sidebar>
      </Body>

      <StatusBar>
        <StatusCell $w={280}>Лист 1 из 1</StatusCell>
        <StatusCell $w={277} />
        <StatusCell $w={266}>Базовый<SigMark>SA</SigMark></StatusCell>
        <StatusCell $w={68} />
        <StatusCell $w={30} $c><svg width="14" height="12"><rect x="1" y="3" width="9" height="7" fill="#8f8f8f" /><path d="M12 1v10" stroke="#777" /></svg></StatusCell>
        <StatusCell $w={28} $c><svg width="12" height="14"><path d="M1.5 1.5h9v11h-9Z" fill="#f7f7f7" stroke="#aaa" /><path d="M3 7l2 3 5-7" fill="none" stroke="#aaa" /></svg></StatusCell>
        <StatusCell $w={29} />
        <StatusCell $w={271} $c>Сумма=0</StatusCell>
        <ZoomCell $w={142}>
          <ZoomSign>−</ZoomSign>
          <ZoomTrack />
          <ZoomSign>+</ZoomSign>
        </ZoomCell>
        <ZoomPct>100 %</ZoomPct>
      </StatusBar>
      <BottomEdge><BottomTab $w={60} /><BottomTab $w={60} /></BottomEdge>

      <Dialog>
        <DlgTitle>
          Настройка
          <DlgClose><svg width="10" height="10"><path d="M1 1l8 8M9 1l-8 8" stroke="#fff" strokeWidth="1.8" /></svg></DlgClose>
        </DlgTitle>
        <DlgInner>
          <Tabs>
            <DlgTab $w={44} $on>Меню</DlgTab>
            <DlgTab $w={67}>Клавиатура</DlgTab>
            <DlgTab $w={129}>Панели инструментов</DlgTab>
            <DlgTab $w={54}>События</DlgTab>
          </Tabs>
          <Panel>
            <Heading $mt={1}>Меню LibreOffice Calc</Heading>
            <BlockRow $mt={6}>
              <FieldLabel><U>М</U>еню</FieldLabel>
              <Combo $w={265} $h={22}>
                <ComboSel>Файл</ComboSel>
                <ComboBtn><Chevron /></ComboBtn>
              </Combo>
              <ButtonStack>
                <PushBtn><span><U>С</U>оздать...</span></PushBtn>
                <SplitBtn><SplitLabel>Меню</SplitLabel><SplitArrow /></SplitBtn>
              </ButtonStack>
            </BlockRow>
            <Heading $mt={7}>Содержимое меню</Heading>
            <BlockRow $mt={5}>
              <FieldLabel $shift={-2}><U>Э</U>лементы</FieldLabel>
              <ItemList>
                <Rows>
                  <ItemRow $sel><ItemIcon><Icon name="docBlank" /></ItemIcon><ItemText>Создать</ItemText></ItemRow>
                  <ItemRow><ItemIcon><Icon name="open" /></ItemIcon><ItemText>Открыть...</ItemText></ItemRow>
                  <ItemRow><ItemIcon /><ItemText>Предыдущие документы</ItemText></ItemRow>
                  <ItemRow><ItemIcon /><Dashes>{dash}</Dashes></ItemRow>
                  <ItemRow><ItemIcon><Icon name="wizard" /></ItemIcon><ItemText>Мастер</ItemText></ItemRow>
                  <ItemRow><ItemIcon /><Dashes>{dash}</Dashes></ItemRow>
                  <ItemRow><ItemIcon /><ItemText>Шаблоны</ItemText><Sub /></ItemRow>
                  <ItemRow><ItemIcon /><Dashes>{dash}</Dashes></ItemRow>
                  <ItemRow><ItemIcon><Icon name="close" size={22} /></ItemIcon><ItemText>Закрыть</ItemText></ItemRow>
                </Rows>
                <ListScroll>
                  <VArrow><Chevron dir="up" /></VArrow>
                  <ListThumb />
                  <ListTrack />
                  <VArrow><Chevron dir="down" /></VArrow>
                </ListScroll>
              </ItemList>
              <MoveCol>
                <MoveBtn><svg width="16" height="16"><path d="M8 1l7 7h-4v7H5V8H1Z" fill="#a5a5a5" /></svg></MoveBtn>
                <MoveBtn><svg width="16" height="16"><path d="M8 15L1 8h4V1h6v7h4Z" fill="#111" /></svg></MoveBtn>
              </MoveCol>
              <ButtonStack $mt={1}>
                <PushBtn><span><U>Д</U>обавить...</span></PushBtn>
                <SplitBtn><SplitLabel>Изменить</SplitLabel><SplitArrow /></SplitBtn>
              </ButtonStack>
            </BlockRow>
            <BlockRow $mt={7}>
              <FieldLabel $shift={1}>Со<U>х</U>ранить в</FieldLabel>
              <Combo $w={107} $h={22}>
                <ComboText>LibreOffice Calc</ComboText>
                <ComboBtn $w={15}><Chevron /></ComboBtn>
              </Combo>
            </BlockRow>
            <Heading $mt={6}>Описание</Heading>
            <Desc />
          </Panel>
          <Footer>
            <FooterBtn><span><U>С</U>правка</span></FooterBtn>
            <FooterGroup>
              <FooterBtn $def>OK</FooterBtn>
              <FooterBtn>Отменить</FooterBtn>
              <FooterBtn><span><U>В</U>осстановить</span></FooterBtn>
            </FooterGroup>
          </Footer>
        </DlgInner>
      </Dialog>
    </Page>
  );
}
